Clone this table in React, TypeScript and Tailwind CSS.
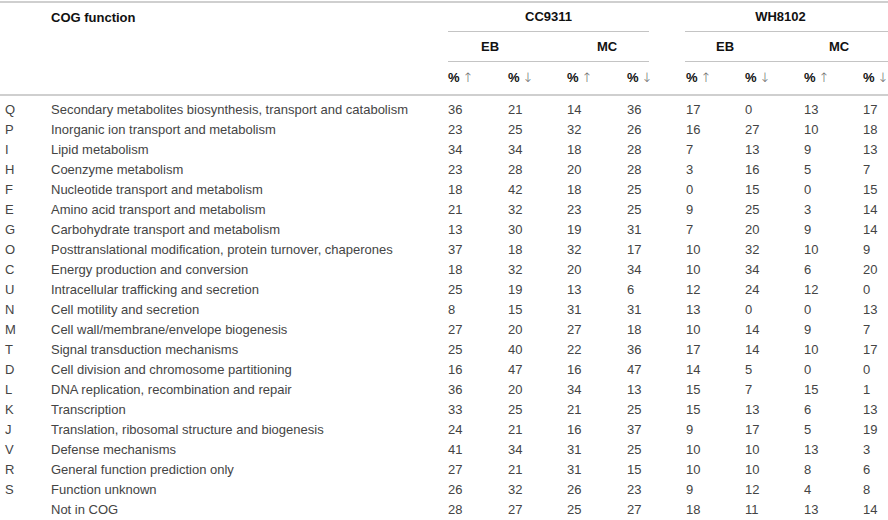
import React from "react";

type Row = [string, string, number[]];

const rows: Row[] = [
  ["Q", "Secondary metabolites biosynthesis, transport and catabolism", [36, 21, 14, 36, 17, 0, 13, 17]],
  ["P", "Inorganic ion transport and metabolism", [23, 25, 32, 26, 16, 27, 10, 18]],
  ["I", "Lipid metabolism", [34, 34, 18, 28, 7, 13, 9, 13]],
  ["H", "Coenzyme metabolism", [23, 28, 20, 28, 3, 16, 5, 7]],
  ["F", "Nucleotide transport and metabolism", [18, 42, 18, 25, 0, 15, 0, 15]],
  ["E", "Amino acid transport and metabolism", [21, 32, 23, 25, 9, 25, 3, 14]],
  ["G", "Carbohydrate transport and metabolism", [13, 30, 19, 31, 7, 20, 9, 14]],
  ["O", "Posttranslational modification, protein turnover, chaperones", [37, 18, 32, 17, 10, 32, 10, 9]],
  ["C", "Energy production and conversion", [18, 32, 20, 34, 10, 34, 6, 20]],
  ["U", "Intracellular trafficking and secretion", [25, 19, 13, 6, 12, 24, 12, 0]],
  ["N", "Cell motility and secretion", [8, 15, 31, 31, 13, 0, 0, 13]],
  ["M", "Cell wall/membrane/envelope biogenesis", [27, 20, 27, 18, 10, 14, 9, 7]],
  ["T", "Signal transduction mechanisms", [25, 40, 22, 36, 17, 14, 10, 17]],
  ["D", "Cell division and chromosome partitioning", [16, 47, 16, 47, 14, 5, 0, 0]],
  ["L", "DNA replication, recombination and repair", [36, 20, 34, 13, 15, 7, 15, 1]],
  ["K", "Transcription", [33, 25, 21, 25, 15, 13, 6, 13]],
  ["J", "Translation, ribosomal structure and biogenesis", [24, 21, 16, 37, 9, 17, 5, 19]],
  ["V", "Defense mechanisms", [41, 34, 31, 25, 10, 10, 13, 3]],
  ["R", "General function prediction only", [27, 21, 31, 15, 10, 10, 8, 6]],
  ["S", "Function unknown", [26, 32, 26, 23, 9, 12, 4, 8]],
  ["", "Not in COG", [28, 27, 25, 27, 18, 11, 13, 14]],
];

// letter | function | 8 value columns
const cols = "grid grid-cols-[46px_402px_60px_59px_60px_59px_59px_59px_59px_25px]";

const arrows = ["↑", "↓", "↑", "↓", "↑", "↓", "↑", "↓"];

export default function App() {
  return (
    <div
      className="h-[520px] w-[888px] overflow-hidden bg-white pt-[1px] text-[13px] text-[#444]"
      style={{ fontFamily: '"Liberation Sans", Arial, sans-serif' }}
    >
      <div className="h-[2px] bg-[#cfcfcf]" />

      {/* header */}
      <div className={`${cols} grid-rows-[29px_30px_32px]`}>
        <div className="col-start-2 row-start-1 flex items-center pl-[5px] font-bold text-[#111]">COG function</div>

        <div className="col-span-4 col-start-3 row-start-1 mr-[37px] flex items-center justify-center border-b border-[#c4c4c4] font-bold text-[#111]">
          CC9311
        </div>
        <div className="col-span-4 col-start-7 row-start-1 -ml-[1px] flex items-center justify-center border-b border-[#c4c4c4] pr-[12px] font-bold text-[#111]">
          WH8102
        </div>

        <div className="col-span-4 col-start-3 row-start-2 mr-[37px] flex items-center justify-between border-b border-[#c4c4c4] font-bold text-[#111]">
          <span className="w-[84px] text-center">EB</span>
          <span className="w-[84px] text-center">MC</span>
        </div>
        <div className="col-span-4 col-start-7 row-start-2 -ml-[1px] flex items-center justify-between border-b border-[#c4c4c4] font-bold text-[#111]">
          <span className="w-[80px] text-center">EB</span>
          <span className="w-[98px] text-center">MC</span>
        </div>

        {arrows.map((a, i) => (
          <div key={i} className="row-start-3 flex items-center whitespace-nowrap" style={{ gridColumnStart: i + 3 }}>
            <span className="font-bold text-[#111]">%</span>
            <span className="ml-[3px] font-['DejaVu_Sans',sans-serif] text-[13px] font-extralight text-[#666]">{a}</span>
          </div>
        ))}
      </div>

      <div className="h-[2px] bg-[#cfcfcf]" />

      {/* body */}
      <div className="pt-[4px]">
        {rows.map(([code, label, vals]) => (
          <div key={label} className={`${cols} h-[20px] items-center leading-[20px]`}>
            <div className="pl-[5px]">{code}</div>
            <div className="pl-[5px] whitespace-nowrap">{label}</div>
            {vals.map((v, i) => (
              <div key={i}>{v}</div>
            ))}
          </div>
        ))}
      </div>
    </div>
  );
}
